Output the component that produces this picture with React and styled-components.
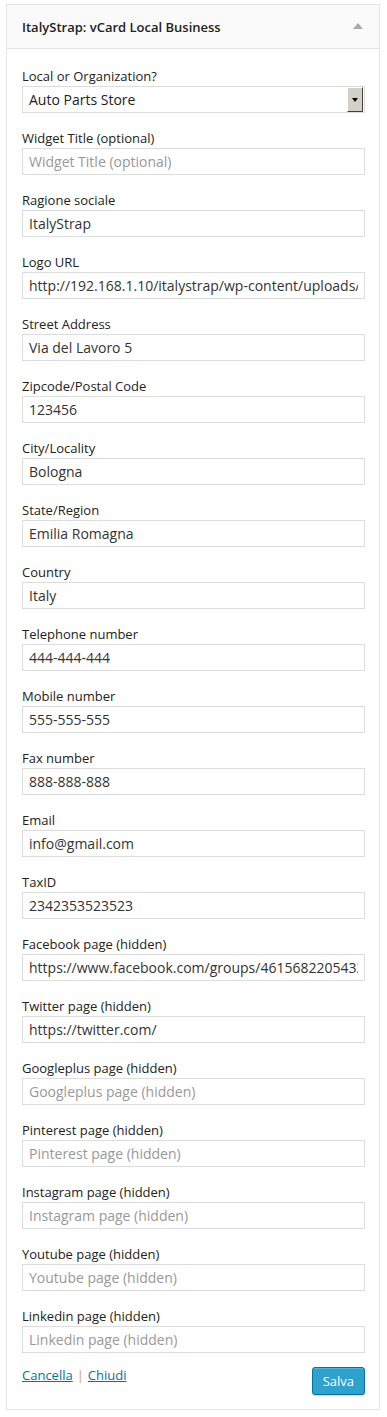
import React from "react";
import styled, { createGlobalStyle } from "styled-components";

const GlobalStyle = createGlobalStyle`
  body {
    margin: 0;
    background: #fff;
    font-family: "Open Sans", "Liberation Sans", sans-serif;
    color: #222;
  }
`;

const Panel = styled.section`
  margin: 4px 0 0 6px;
  width: 374px;
  box-sizing: border-box;
  border: 1px solid #e5e5e5;
  background: #fff;
`;

const Header = styled.header`
  display: flex;
  align-items: center;
  justify-content: space-between;
  height: 43px;
  padding: 0 16px 0 15px;
  background: #fafafa;
  border-bottom: 1px solid #e5e5e5;
`;

const Title = styled.h3`
  margin: 0;
  font-size: 13px;
  font-weight: 600;
  color: #222;
`;

const Toggle = styled.span`
  width: 0;
  height: 0;
  border-left: 5px solid transparent;
  border-right: 5px solid transparent;
  border-bottom: 6px solid #aaa;
  margin-top: -2px;
`;

const Body = styled.div`
  padding: 18px 14px 14px 15px;
`;

const Field = styled.div`
  display: flex;
  flex-direction: column;
  margin-bottom: 16px;
`;

const Label = styled.label`
  font-size: 13px;
  line-height: 18px;
  color: #222;
  margin-bottom: 1px;
`;

const Input = styled.input`
  box-sizing: border-box;
  width: 100%;
  height: 27px;
  margin: 0;
  padding: 0 6px;
  border: 1px solid #ddd;
  background: #fff;
  font-family: "Open Sans", "Liberation Sans", sans-serif;
  font-size: 14px;
  color: #333;
  outline: none;
  &::placeholder {
    color: #999;
  }
`;

const SelectBox = styled.div`
  box-sizing: border-box;
  display: flex;
  align-items: center;
  height: 27px;
  border: 1px solid #ddd;
  font-size: 14px;
  color: #222;
  padding-left: 6px;
  span {
    flex: 1;
  }
`;

const SelectArrow = styled.div`
  display: flex;
  align-items: center;
  justify-content: center;
  width: 14px;
  height: 23px;
  margin-right: 1px;
  background: #d4d0c8;
  border-top: 1px solid #fff;
  border-left: 1px solid #fff;
  border-right: 1px solid #404040;
  border-bottom: 1px solid #404040;
  &::after {
    content: "";
    border-left: 3px solid transparent;
    border-right: 3px solid transparent;
    border-top: 4px solid #000;
  }
`;

const Footer = styled.div`
  display: flex;
  justify-content: space-between;
  align-items: flex-start;
  margin-top: -3px;
`;

const Links = styled.div`
  font-size: 13px;
  line-height: 18px;
  color: #aaa;
  a {
    color: #0074a2;
    text-decoration: underline;
  }
`;

const Sep = styled.span`
  margin: 0 4px;
  color: #c9a15a;
`;

const SaveButton = styled.button`
  height: 28px;
  padding: 0 10px 1px;
  background: #2ea2cc;
  border: 1px solid #0074a2;
  border-radius: 3px;
  box-shadow: inset 0 1px 0 rgba(120, 200, 230, 0.5), 0 1px 0 rgba(0, 0, 0, 0.15);
  color: #fff;
  font-family: "Open Sans", "Liberation Sans", sans-serif;
  font-size: 13px;
  margin-top: 1px;
`;

const fields = [
  ["Widget Title (optional)", ""],
  ["Ragione sociale", "ItalyStrap"],
  ["Logo URL", "http://192.168.1.10/italystrap/wp-content/uploads/2014/07/logo.png"],
  ["Street Address", "Via del Lavoro 5"],
  ["Zipcode/Postal Code", "123456"],
  ["City/Locality", "Bologna"],
  ["State/Region", "Emilia Romagna"],
  ["Country", "Italy"],
  ["Telephone number", "444-444-444"],
  ["Mobile number", "555-555-555"],
  ["Fax number", "888-888-888"],
  ["Email", "info@gmail.com"],
  ["TaxID", "2342353523523"],
  ["Facebook page (hidden)", "https://www.facebook.com/groups/461568220543210/"],
  ["Twitter page (hidden)", "https://twitter.com/"],
  ["Googleplus page (hidden)", ""],
  ["Pinterest page (hidden)", ""],
  ["Instagram page (hidden)", ""],
  ["Youtube page (hidden)", ""],
  ["Linkedin page (hidden)", ""],
];

export default function App() {
  return (
    <>
      <GlobalStyle />
      <Panel>
        <Header>
          <Title>ItalyStrap: vCard Local Business</Title>
          <Toggle />
        </Header>
        <Body>
          <Field>
            <Label>Local or Organization?</Label>
            <SelectBox>
              <span>Auto Parts Store</span>
              <SelectArrow />
            </SelectBox>
          </Field>
          {fields.map(([label, value]) => (
            <Field key={label}>
              <Label>{label}</Label>
              <Input defaultValue={value} placeholder={label} readOnly />
            </Field>
          ))}
          <Footer>
            <Links>
              <a href="#">Cancella</a>
              <Sep>|</Sep>
              <a href="#">Chiudi</a>
            </Links>
            <SaveButton>Salva</SaveButton>
          </Footer>
        </Body>
      </Panel>
    </>
  );
}
